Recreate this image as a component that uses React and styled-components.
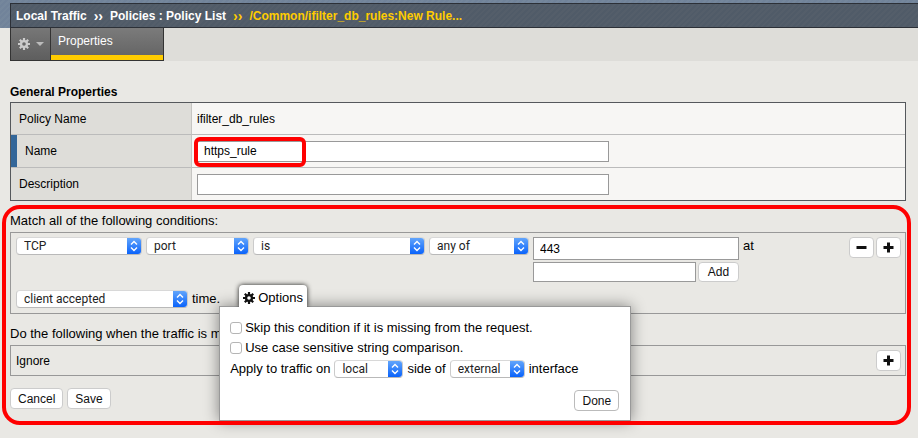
import React from "react";
import styled, { createGlobalStyle } from "styled-components";

const GlobalStyle = createGlobalStyle`
  *, *::before, *::after { box-sizing: border-box; }
  body {
    margin: 0;
    background: #e9e8e4;
    color: #000;
    font: 12px/16px "Liberation Sans", Arial, sans-serif;
  }
  button, input, select { font: inherit; color: inherit; margin: 0; }
`;

const Page = styled.div`
  min-height: 100vh;
  padding-bottom: 20px;
`;

const Header = styled.header`
  padding: 3px 0 0 10px;
  background: repeating-linear-gradient(135deg, #71839a 0 2px, #75879c 2px 4px);
`;

const Breadcrumb = styled.nav`
  display: flex;
  align-items: center;
  gap: 7px;
  height: 25px;
  padding-left: 5px;
  border: 1px solid #2c3037;
  border-right: 0;
  background: repeating-linear-gradient(135deg, #505b68 0 2px, #545e6a 2px 4px);
  color: #fff;
  font-size: 12px;
  font-weight: bold;
  white-space: nowrap;
`;

const Crumb = styled.a`
  color: ${(p) => (p.$current ? "#fc0" : "#fff")};
  text-decoration: none;
`;

const Separator = styled.span`
  color: ${(p) => (p.$current ? "#fc0" : "#fff")};
  font-size: 14px;
`;

const TabStrip = styled.div`
  display: flex;
  height: 33px;
  margin-left: 10px;
  background: #deddd9;
`;

const MenuButton = styled.button`
  display: flex;
  align-items: center;
  justify-content: center;
  gap: 6px;
  width: 41px;
  padding: 0;
  border: 1px solid #333;
  border-top: 0;
  background: linear-gradient(#777, #5e5e5e);
`;

const Tab = styled.a`
  width: 113px;
  padding: 5px 7px;
  border: solid #333;
  border-width: 0 1px 1px 0;
  background: linear-gradient(#7b7b7b, #626262);
  box-shadow: inset 0 -5px #fc0;
  color: #fff;
  text-decoration: none;
`;

const Main = styled.main`
  padding: 23px 12px 0 10px;
`;

const Heading = styled.h2`
  margin: 0 0 2px;
  font-size: 12px;
  line-height: 16px;
`;

const PropertyTable = styled.table`
  width: 100%;
  border: 1px solid #55585c;
  border-collapse: separate;
  border-spacing: 0;
  background: #f7f6f4;
`;

const LabelCell = styled.th`
  width: 181px;
  height: ${(p) => (p.$first ? "31px" : "33px")};
  padding: 0 7px;
  padding-left: ${(p) => (p.$required ? "14px" : "8px")};
  border-right: 1px solid #c6c5c2;
  border-top: ${(p) => (p.$first ? "0" : "1px solid #bbb")};
  background: #deddd9;
  box-shadow: ${(p) => (p.$required ? "inset 6px 0 #369" : "none")};
  font-weight: normal;
  text-align: left;
`;

const ValueCell = styled.td`
  padding: 0 5px;
  border-top: ${(p) => (p.$first ? "0" : "1px solid #bbb")};
`;

const FieldFrame = styled.div`
  position: relative;
  width: 412px;
  max-width: 100%;
`;

const TextInput = styled.input`
  display: block;
  width: 100%;
  height: ${(p) => p.$height || "21px"};
  padding: 0 6px;
  border: 1px solid #999;
  background: #fff;
`;

const FieldHighlight = styled.span`
  position: absolute;
  inset: -4px auto -5px -3px;
  width: 112px;
  border: 4px solid red;
  border-radius: 6px;
  pointer-events: none;
`;

const RuleSection = styled.section`
  position: relative;
  margin-top: 12px;
`;

const SectionHighlight = styled.div`
  position: absolute;
  inset: -8px -5px -16px -8px;
  z-index: 3;
  border: 4px solid red;
  border-radius: 18px;
  pointer-events: none;
`;

const Caption = styled.p`
  margin: 0 0 3px;
  font-size: 13px;
`;

const Box = styled.div`
  display: ${(p) => (p.$row ? "flex" : "block")};
  align-items: center;
  justify-content: space-between;
  margin-bottom: 12px;
  padding: 4px 4px 4px 5px;
  border: 1px solid #989898;
`;

const ConditionRow = styled.div`
  display: flex;
  align-items: flex-start;
  gap: 4px;
  margin-bottom: 3px;
`;

const TimeRow = styled.div`
  display: flex;
  align-items: flex-end;
  gap: 4px;
  height: 24px;
  padding-bottom: 1px;
`;

const SelectFrame = styled.span`
  position: relative;
  display: inline-block;
  flex: none;
  width: ${(p) => p.$width};
  height: 18px;
  overflow: hidden;
  border: 1px solid #cbcbcb;
  border-top-color: #d8d8d8;
  border-bottom-color: #b9b9b9;
  border-radius: 4px;
  background: #fff;
`;

const NativeSelect = styled.select`
  display: block;
  width: 100%;
  height: 16px;
  padding: 0 16px 0 7px;
  appearance: none;
  border: 0;
  background: transparent;
  color: #222;
  font: 12px/16px Roboto, sans-serif;
`;

const SelectArrow = styled.svg`
  position: absolute;
  inset: 0 0 0 auto;
  width: 14px;
  height: 16px;
  background: linear-gradient(#62a5fb, #0a63fb);
  pointer-events: none;
`;

const ValueGrid = styled.div`
  display: grid;
  grid-template-columns: 163px 41px;
  gap: 2px;
`;

const FullWidth = styled.div`
  grid-column: 1 / -1;
`;

const Text = styled.span`
  font-size: 13px;
  line-height: 18px;
  white-space: nowrap;
`;

const Button = styled.button`
  height: ${(p) => p.$height || "21px"};
  padding: 0 7px;
  border: 1px solid ${(p) => (p.$strong ? "#bbb" : "#ccc")};
  border-radius: 4px;
  background: #fff;
  color: #111;
  white-space: nowrap;
`;

const IconButton = styled(Button)`
  display: grid;
  place-items: center;
  width: 25px;
  padding: 0;
`;

const ButtonGroup = styled.div`
  display: flex;
  gap: ${(p) => p.$gap || "4px"};
  margin-left: ${(p) => (p.$end ? "auto" : "0")};
`;

const OptionsAnchor = styled.div`
  position: relative;
  align-self: flex-start;
  margin-left: 15px;
`;

const OptionsTab = styled.button`
  position: relative;
  z-index: 2;
  display: flex;
  align-items: center;
  gap: 3px;
  height: 22px;
  padding: 4px 4px 0;
  border: 0;
  border-radius: 4px 4px 0 0;
  background: #fff;
  box-shadow: 0 0 5px rgba(0, 0, 0, 0.9);
  clip-path: inset(-8px -8px 0 -8px);
  font-size: 13px;
`;

const OptionsPanel = styled.div`
  position: absolute;
  top: 21px;
  left: -20px;
  z-index: 1;
  width: 412px;
  height: 115px;
  padding: 13px 11px 10px 10px;
  border: 1px solid #999;
  background: #fff;
  box-shadow: 0 0 14px rgba(0, 0, 0, 0.45);
  font-size: 13px;
`;

const CheckRow = styled.label`
  display: flex;
  align-items: center;
  gap: 3px;
  height: 16px;
  margin-bottom: 4px;
`;

const Checkbox = styled.input`
  flex: none;
  width: 12px;
  height: 12px;
  appearance: none;
  border: 1px solid #b5b5b5;
  border-radius: 3px;
  background: #fff;

  &:checked { background: #0a63fb; }
`;

const InlineRow = styled.div`
  display: flex;
  align-items: center;
  gap: 4px;
  height: 18px;
`;

const PanelFooter = styled.div`
  display: flex;
  justify-content: flex-end;
  margin-top: 12px;
  font-size: 12px;
`;

const Gear = ({ size, color, hole }) => (
  <svg width={size} height={size} viewBox="0 0 12 12" aria-hidden="true">
    <g stroke={color} strokeWidth="2.2">
      <path d="M6 0V12M0 6H12M1.8 1.8L10.2 10.2M10.2 1.8L1.8 10.2" />
    </g>
    <circle cx="6" cy="6" r="4.1" fill={color} />
    <circle cx="6" cy="6" r="1.8" fill={hole} />
  </svg>
);

const Plus = () => (
  <svg width="11" height="11" aria-hidden="true">
    <path d="M5.5 0.5V10.5M0.5 5.5H10.5" stroke="#111" strokeWidth="3" />
  </svg>
);

const Minus = () => (
  <svg width="11" height="11" aria-hidden="true">
    <path d="M0.5 5.5H10.5" stroke="#111" strokeWidth="3" />
  </svg>
);

const Select = ({ value, width, label }) => (
  <SelectFrame $width={width}>
    <NativeSelect aria-label={label} defaultValue={value}>
      <option>{value}</option>
    </NativeSelect>
    <SelectArrow viewBox="0 0 14 16" aria-hidden="true">
      <path d="M4 6.5L7 3.5L10 6.5M4 9.5L7 12.5L10 9.5" fill="none" stroke="#fff" strokeWidth="1.4" />
    </SelectArrow>
  </SelectFrame>
);

export default function App() {
  return (
    <Page>
      <GlobalStyle />
      <Header>
        <Breadcrumb aria-label="Breadcrumb">
          <Crumb href="#traffic">Local Traffic</Crumb>
          <Separator>››</Separator>
          <Crumb href="#policies">Policies : Policy List</Crumb>
          <Separator $current>››</Separator>
          <Crumb href="#rule" $current>/Common/ifilter_db_rules:New Rule...</Crumb>
        </Breadcrumb>
      </Header>
      <TabStrip>
        <MenuButton aria-label="Menu">
          <Gear size={12} color="#ccc" hole="#6a6a6a" />
          <svg width="8" height="4" aria-hidden="true">
            <path d="M0 0H8L4 4Z" fill="#bbb" />
          </svg>
        </MenuButton>
        <Tab href="#properties">Properties</Tab>
      </TabStrip>
      <Main>
        <Heading>General Properties</Heading>
        <PropertyTable>
          <tbody>
            <tr>
              <LabelCell scope="row" $first>Policy Name</LabelCell>
              <ValueCell $first>ifilter_db_rules</ValueCell>
            </tr>
            <tr>
              <LabelCell scope="row" $required><label htmlFor="name">Name</label></LabelCell>
              <ValueCell>
                <FieldFrame>
                  <TextInput id="name" defaultValue="https_rule" />
                  <FieldHighlight />
                </FieldFrame>
              </ValueCell>
            </tr>
            <tr>
              <LabelCell scope="row"><label htmlFor="description">Description</label></LabelCell>
              <ValueCell>
                <FieldFrame><TextInput id="description" /></FieldFrame>
              </ValueCell>
            </tr>
          </tbody>
        </PropertyTable>

        <RuleSection>
          <Caption>Match all of the following conditions:</Caption>
          <Box>
            <ConditionRow>
              <Select label="Operand" value="TCP" width="126px" />
              <Select label="Selector" value="port" width="103px" />
              <Select label="Negation" value="is" width="172px" />
              <Select label="Condition" value="any of" width="100px" />
              <ValueGrid>
                <FullWidth><TextInput aria-label="Values" $height="23px" defaultValue="443" /></FullWidth>
                <TextInput aria-label="New value" $height="20px" />
                <Button $height="20px">Add</Button>
              </ValueGrid>
              <Text>at</Text>
              <ButtonGroup $end $gap="2px">
                <IconButton aria-label="Remove condition"><Minus /></IconButton>
                <IconButton aria-label="Add condition"><Plus /></IconButton>
              </ButtonGroup>
            </ConditionRow>
            <TimeRow>
              <Select label="Event" value="client accepted" width="172px" />
              <Text>time.</Text>
              <OptionsAnchor>
                <OptionsTab aria-expanded="true">
                  <Gear size={12} color="#111" hole="#fff" />
                  Options
                </OptionsTab>
                <OptionsPanel>
                  <CheckRow>
                    <Checkbox type="checkbox" />
                    Skip this condition if it is missing from the request.
                  </CheckRow>
                  <CheckRow>
                    <Checkbox type="checkbox" />
                    Use case sensitive string comparison.
                  </CheckRow>
                  <InlineRow>
                    <Text>Apply to traffic on</Text>
                    <Select label="Side" value="local" width="69px" />
                    <Text>side of</Text>
                    <Select label="Interface" value="external" width="75px" />
                    <Text>interface</Text>
                  </InlineRow>
                  <PanelFooter><Button $strong>Done</Button></PanelFooter>
                </OptionsPanel>
              </OptionsAnchor>
            </TimeRow>
          </Box>
          <Caption>Do the following when the traffic is matched:</Caption>
          <Box $row>
            <span>Ignore</span>
            <IconButton aria-label="Add action"><Plus /></IconButton>
          </Box>
          <ButtonGroup>
            <Button>Cancel</Button>
            <Button>Save</Button>
          </ButtonGroup>
          <SectionHighlight />
        </RuleSection>
      </Main>
    </Page>
  );
}
